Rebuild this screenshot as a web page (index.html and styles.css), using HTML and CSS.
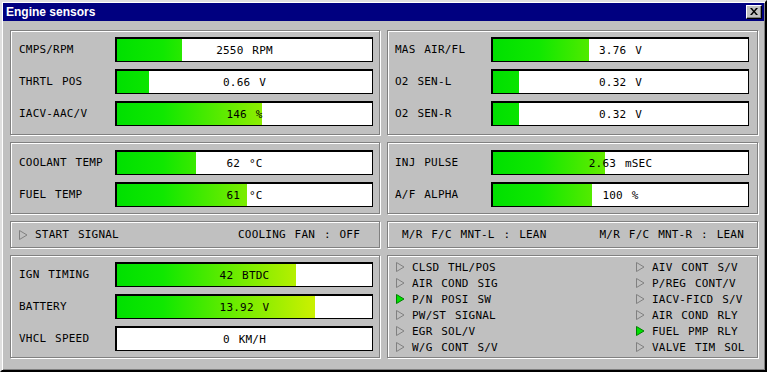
FILE: index.html
```html
<!DOCTYPE html>
<html>
  <head>
    <link rel="stylesheet" href="styles.css">
  </head>
  <body>
    <div class="window">
      <div class="titlebar">
        <span class="title">Engine sensors</span>
        <span class="close">
          <svg width="8" height="7" viewBox="0 0 8 7"><path d="M0 0h2l2 2.5L6 0h2L5 3.5 8 7H6L4 4.5 2 7H0l3-3.5z" fill="#000"/></svg>
        </span>
      </div>

      <div class="content">
        <!-- row 1 -->
        <div class="group left top">
          <div class="row"><span class="label">CMPS/RPM</span><div class="bar"><div class="cover" style="margin-left:25.5%"></div><span class="value">2550 RPM</span></div></div>
          <div class="row"><span class="label">THRTL POS</span><div class="bar"><div class="cover" style="margin-left:12.5%"></div><span class="value">0.66 V</span></div></div>
          <div class="row"><span class="label">IACV-AAC/V</span><div class="bar"><div class="cover" style="margin-left:57%"></div><span class="value">146 %</span></div></div>
        </div>
        <div class="group right top">
          <div class="row"><span class="label">MAS AIR/FL</span><div class="bar"><div class="cover" style="margin-left:37.5%"></div><span class="value">3.76 V</span></div></div>
          <div class="row"><span class="label">O2 SEN-L</span><div class="bar"><div class="cover" style="margin-left:10%"></div><span class="value">0.32 V</span></div></div>
          <div class="row"><span class="label">O2 SEN-R</span><div class="bar"><div class="cover" style="margin-left:10%"></div><span class="value">0.32 V</span></div></div>
        </div>

        <!-- row 2 -->
        <div class="group left">
          <div class="row"><span class="label">COOLANT TEMP</span><div class="bar"><div class="cover" style="margin-left:31%"></div><span class="value">62 °C</span></div></div>
          <div class="row"><span class="label">FUEL TEMP</span><div class="bar"><div class="cover" style="margin-left:51%"></div><span class="value">61 °C</span></div></div>
        </div>
        <div class="group right">
          <div class="row"><span class="label">INJ PULSE</span><div class="bar"><div class="cover" style="margin-left:44%"></div><span class="value">2.63 mSEC</span></div></div>
          <div class="row"><span class="label">A/F ALPHA</span><div class="bar"><div class="cover" style="margin-left:39%"></div><span class="value">100 %</span></div></div>
        </div>

        <!-- status row -->
        <div class="group status status-left">
          <span class="flag"><svg class="tri" width="9" height="10" viewBox="0 0 9 10"><path d="M0.5 0.5L8 5 0.5 9.5z" fill="none" stroke="#808080"/></svg>START SIGNAL</span>
          <span>COOLING FAN : OFF</span>
        </div>
        <div class="group status status-right">
          <span>M/R F/C MNT-L : LEAN</span>
          <span>M/R F/C MNT-R : LEAN</span>
        </div>

        <!-- row 4 -->
        <div class="group left top">
          <div class="row"><span class="label">IGN TIMING</span><div class="bar"><div class="cover" style="margin-left:70%"></div><span class="value">42 BTDC</span></div></div>
          <div class="row"><span class="label">BATTERY</span><div class="bar"><div class="cover" style="margin-left:77.5%"></div><span class="value">13.92 V</span></div></div>
          <div class="row"><span class="label">VHCL SPEED</span><div class="bar"><div class="cover" style="margin-left:0%"></div><span class="value">0 KM/H</span></div></div>
        </div>
        <div class="group right switches">
          <div class="flag"><svg class="tri" width="9" height="10" viewBox="0 0 9 10"><path d="M0.5 0.5L8 5 0.5 9.5z" fill="none" stroke="#808080"/></svg>CLSD THL/POS</div>
          <div class="flag"><svg class="tri" width="9" height="10" viewBox="0 0 9 10"><path d="M0.5 0.5L8 5 0.5 9.5z" fill="none" stroke="#808080"/></svg>AIV CONT S/V</div>
          <div class="flag"><svg class="tri" width="9" height="10" viewBox="0 0 9 10"><path d="M0.5 0.5L8 5 0.5 9.5z" fill="none" stroke="#808080"/></svg>AIR COND SIG</div>
          <div class="flag"><svg class="tri" width="9" height="10" viewBox="0 0 9 10"><path d="M0.5 0.5L8 5 0.5 9.5z" fill="none" stroke="#808080"/></svg>P/REG CONT/V</div>
          <div class="flag"><svg class="tri" width="9" height="10" viewBox="0 0 9 10"><path d="M0.5 0.5L8 5 0.5 9.5z" fill="#00e000" stroke="#008000"/></svg>P/N POSI SW</div>
          <div class="flag"><svg class="tri" width="9" height="10" viewBox="0 0 9 10"><path d="M0.5 0.5L8 5 0.5 9.5z" fill="none" stroke="#808080"/></svg>IACV-FICD S/V</div>
          <div class="flag"><svg class="tri" width="9" height="10" viewBox="0 0 9 10"><path d="M0.5 0.5L8 5 0.5 9.5z" fill="none" stroke="#808080"/></svg>PW/ST SIGNAL</div>
          <div class="flag"><svg class="tri" width="9" height="10" viewBox="0 0 9 10"><path d="M0.5 0.5L8 5 0.5 9.5z" fill="none" stroke="#808080"/></svg>AIR COND RLY</div>
          <div class="flag"><svg class="tri" width="9" height="10" viewBox="0 0 9 10"><path d="M0.5 0.5L8 5 0.5 9.5z" fill="none" stroke="#808080"/></svg>EGR SOL/V</div>
          <div class="flag"><svg class="tri" width="9" height="10" viewBox="0 0 9 10"><path d="M0.5 0.5L8 5 0.5 9.5z" fill="#00e000" stroke="#008000"/></svg>FUEL PMP RLY</div>
          <div class="flag"><svg class="tri" width="9" height="10" viewBox="0 0 9 10"><path d="M0.5 0.5L8 5 0.5 9.5z" fill="none" stroke="#808080"/></svg>W/G CONT S/V</div>
          <div class="flag"><svg class="tri" width="9" height="10" viewBox="0 0 9 10"><path d="M0.5 0.5L8 5 0.5 9.5z" fill="none" stroke="#808080"/></svg>VALVE TIM SOL</div>
        </div>
      </div>
    </div>
  </body>
</html>
```

FILE: styles.css
```css
html, body {
  margin: 0;
  padding: 0;
  background-color: #c0c0c0;
}
.window {
  width: 767px;
  height: 372px;
  box-sizing: border-box;
  padding: 1px;
  border: 2px solid;
  border-color: #dfdfdf #000 #000 #dfdfdf;
  box-shadow: inset 1px 1px 0 #fff, inset -1px -1px 0 #808080;
  background-color: #c0c0c0;
  font-family: "DejaVu Sans Mono", "Liberation Mono", monospace;
  font-size: 11px;
  letter-spacing: 0.2px;
  color: #000;
}
.titlebar {
  height: 18px;
  background-color: #000080;
  display: flex;
  align-items: center;
  justify-content: space-between;
  padding: 0 2px 0 3px;
}
.title {
  font-family: "Liberation Sans", Arial, sans-serif;
  font-weight: bold;
  font-size: 12px;
  letter-spacing: 0;
  color: #fff;
}
.close {
  width: 16px;
  height: 14px;
  box-sizing: border-box;
  background-color: #c0c0c0;
  border: 1px solid;
  border-color: #fff #000 #000 #fff;
  box-shadow: inset -1px -1px 0 #808080;
  display: flex;
  align-items: center;
  justify-content: center;
  padding: 0 1px 1px 0;
}
.close svg {
  display: block;
}
.content {
  display: grid;
  grid-template-columns: 370px 371px;
  grid-template-rows: 105px 72px 27px 103px;
  column-gap: 7px;
  row-gap: 7px;
  padding: 9px 0 0 7px;
}
.group {
  box-sizing: border-box;
  border: 1px solid #808080;
  box-shadow: inset 1px 1px 0 #fff, 1px 1px 0 #fff;
  display: flex;
  flex-direction: column;
  gap: 7px;
  padding: 7px 6px 0 8px;
}
.group.right {
  padding: 7px 8px 0 7px;
}
.group.top {
  padding-top: 6px;
}
.row {
  display: grid;
  grid-template-columns: 96px 258px;
  height: 25px;
  align-items: center;
}
.label {
  white-space: pre;
  word-spacing: 2px;
}
.bar {
  height: 25px;
  box-sizing: border-box;
  border: 2px solid #000;
  border-width: 2px 1px 1px 2px;
  display: grid;
  background: linear-gradient(to right, #00e000 0%, #10e800 18%, #78ec00 50%, #c4f000 75%, #f0f800 100%);
}
.cover {
  grid-area: 1 / 1;
  background-color: #fff;
}
.value {
  grid-area: 1 / 1;
  align-self: center;
  text-align: center;
  word-spacing: 2px;
}
.status {
  flex-direction: row;
  align-items: center;
  justify-content: space-between;
  padding: 0 19px 0 8px;
  word-spacing: 2px;
}
.status.status-right {
  padding: 0 13px 0 14px;
}
.flag {
  display: flex;
  align-items: center;
  white-space: pre;
  word-spacing: 2px;
}
.tri {
  display: block;
  margin-right: 7px;
}
.group.switches {
  display: grid;
  grid-template-columns: 240px 1fr;
  grid-auto-rows: 16px;
  gap: 0;
  padding: 3px 0 0 8px;
  align-content: start;
}
```
